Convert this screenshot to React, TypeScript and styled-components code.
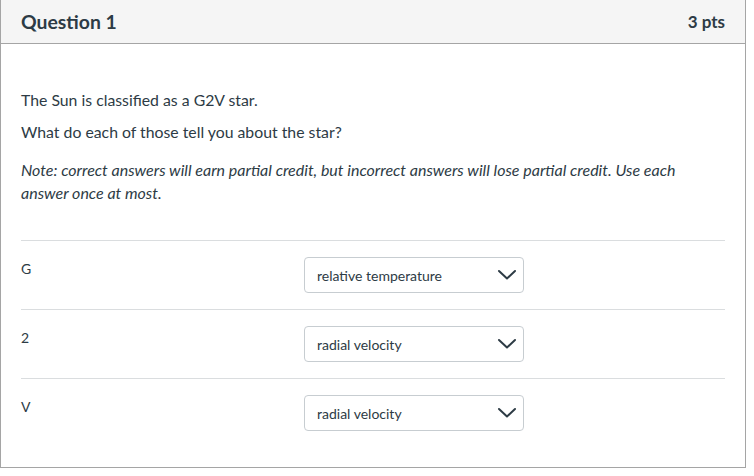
import React from "react";
import styled, { createGlobalStyle } from "styled-components";

const Global = createGlobalStyle`
  html, body { margin: 0; padding: 0; background: #fff; }
  body { font-family: Lato, "Open Sans", sans-serif; color: #2d3b45; }
  * { box-sizing: border-box; }
`;

const Card = styled.div`
  width: 746px;
  height: 468px;
  border: 1px solid #a5a5a5;
  border-top: none;
  background: #fff;
  display: flex;
  flex-direction: column;
`;

const Header = styled.div`
  height: 44px;
  background: #f5f5f5;
  border-bottom: 1px solid #a5a5a5;
  display: flex;
  align-items: center;
  justify-content: space-between;
  padding: 0 20px 1px 20px;
`;

const Title = styled.div`
  font-size: 19.4px;
  font-weight: 700;
  color: #2d3b45;
`;

const Points = styled.div`
  font-size: 17px;
  font-weight: 700;
  color: #2d3b45;
`;

const Body = styled.div`
  padding: 44px 20px 19px 20px;
  display: flex;
  flex-direction: column;
`;

const Para = styled.p<{ $italic?: boolean; $gap?: number }>`
  margin: 0 0 ${(p) => p.$gap ?? 9}px 0;
  font-size: ${(p) => (p.$italic ? 16 : 15.8)}px;
  line-height: 23px;
  font-style: ${(p) => (p.$italic ? "italic" : "normal")};
`;

const Rows = styled.div`
  margin-top: 36px;
  display: flex;
  flex-direction: column;
`;

const Row = styled.div`
  display: flex;
  align-items: flex-start;
  border-top: 1px solid #dadddf;
  padding: 16px 0 16px 0;
`;

const Label = styled.div`
  width: 283px;
  font-size: 14px;
  line-height: 20px;
  margin-top: 2px;
`;

const Select = styled.div`
  width: 220px;
  height: 36px;
  border: 1px solid #c7cdd1;
  border-radius: 4px;
  display: flex;
  align-items: center;
  justify-content: space-between;
  padding: 0 6px 0 12px;
  font-size: 14px;
  color: #2d3b45;
`;

const Chevron = () => (
  <svg width="20" height="12" viewBox="0 0 20 12" fill="none">
    <polyline
      points="2,2 10,9.5 18,2"
      stroke="#2d3b45"
      strokeWidth="2"
      strokeLinecap="round"
      strokeLinejoin="round"
    />
  </svg>
);

const answers = [
  { label: "G", value: "relative temperature" },
  { label: "2", value: "radial velocity" },
  { label: "V", value: "radial velocity" },
];

export default function App() {
  return (
    <>
      <Global />
      <Card>
        <Header>
          <Title>Question 1</Title>
          <Points>3 pts</Points>
        </Header>
        <Body>
          <Para>The Sun is classified as a G2V star.</Para>
          <Para $gap={15}>What do each of those tell you about the star?</Para>
          <Para $italic $gap={0}>
            Note: correct answers will earn partial credit, but incorrect answers will lose partial
            credit. Use each answer once at most.
          </Para>
          <Rows>
            {answers.map((a, i) => (
              <Row key={i}>
                <Label>{a.label}</Label>
                <Select>
                  <span>{a.value}</span>
                  <Chevron />
                </Select>
              </Row>
            ))}
          </Rows>
        </Body>
      </Card>
    </>
  );
}
